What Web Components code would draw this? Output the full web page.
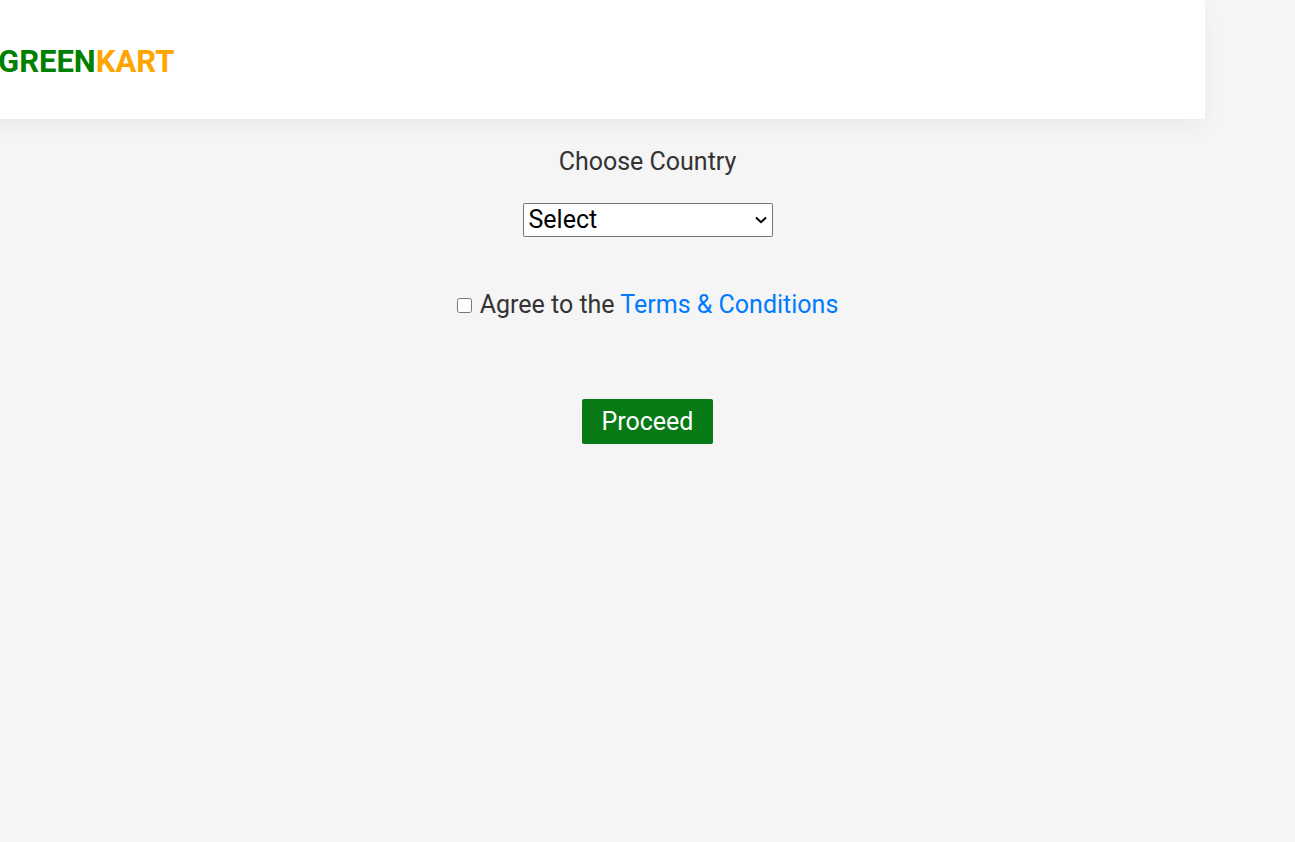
<!DOCTYPE html>
<html lang="en">
<head>
<meta charset="utf-8">
<title>GreenKart</title>
<style>
body { margin: 0; background: #f5f5f5; color: #333; font: 25px/32px Roboto, sans-serif; }
</style>
</head>
<body>
<kart-page>
  <kart-header slot="header"></kart-header>
  <country-form></country-form>
</kart-page>
<script>
const define = (name, html) => {
  const template = document.createElement('template');
  template.innerHTML = html;
  customElements.define(name, class extends HTMLElement {
    constructor() {
      super();
      this.attachShadow({ mode: 'open' }).append(template.content.cloneNode(true));
    }
  });
};

define('kart-page', `
<style>
  :host { display: block; min-height: 100vh; overflow: hidden; }
  main { display: flex; justify-content: center; padding-top: 27px; }
</style>
<slot name="header"></slot>
<main><slot></slot></main>`);

define('kart-header', `
<style>
  :host { display: block; margin: 0 90px 0 -90px; }
  header { display: flex; align-items: center; min-height: 119px; padding: 4px 0 0 88px; box-sizing: border-box;
    background: #fff; box-shadow: 0 10px 20px rgba(0, 0, 0, .04); }
  .brand { font-size: 31px; line-height: 40px; font-weight: 700; color: green; }
  .brand span { color: orange; }
</style>
<header><div class="brand">GREEN<span>KART</span></div></header>`);

define('country-form', `
<style>
  :host { display: block; }
  form { display: flex; flex-direction: column; align-items: center; }
  .pick { display: grid; width: 250px; margin: 25px 0 52px; }
  .pick > * { grid-area: 1 / 1; }
  select { appearance: none; box-sizing: border-box; height: 34px; padding: 0 24px 0 5px; font: inherit;
    color: #000; background: #fff; border: 1px solid #767676; border-radius: 2px; }
  svg { place-self: center end; width: 12px; height: 8px; margin-right: 6px; pointer-events: none; }
  .agree { display: flex; align-items: center; }
  input { width: 15px; height: 15px; margin: 0 8px 0 0; }
  a { color: #007bff; text-decoration: none; }
  button { margin-top: 78px; height: 45px; padding: 0 20px; border: 0; border-radius: 2px;
    background: #077915; color: #fff; font: inherit; }
</style>
<form>
  <label for="country">Choose Country</label>
  <div class="pick">
    <select id="country"><option>Select</option><option>India</option><option>United States</option></select>
    <svg viewBox="0 0 12 8" aria-hidden="true"><path d="M1 1.5 6 6.2 11 1.5" fill="none" stroke="#000" stroke-width="2"/></svg>
  </div>
  <div class="agree"><input id="agree" type="checkbox"><label for="agree">Agree to the <a href="#terms">Terms &amp; Conditions</a></label></div>
  <button type="button">Proceed</button>
</form>`);
</script>
</body>
</html>
